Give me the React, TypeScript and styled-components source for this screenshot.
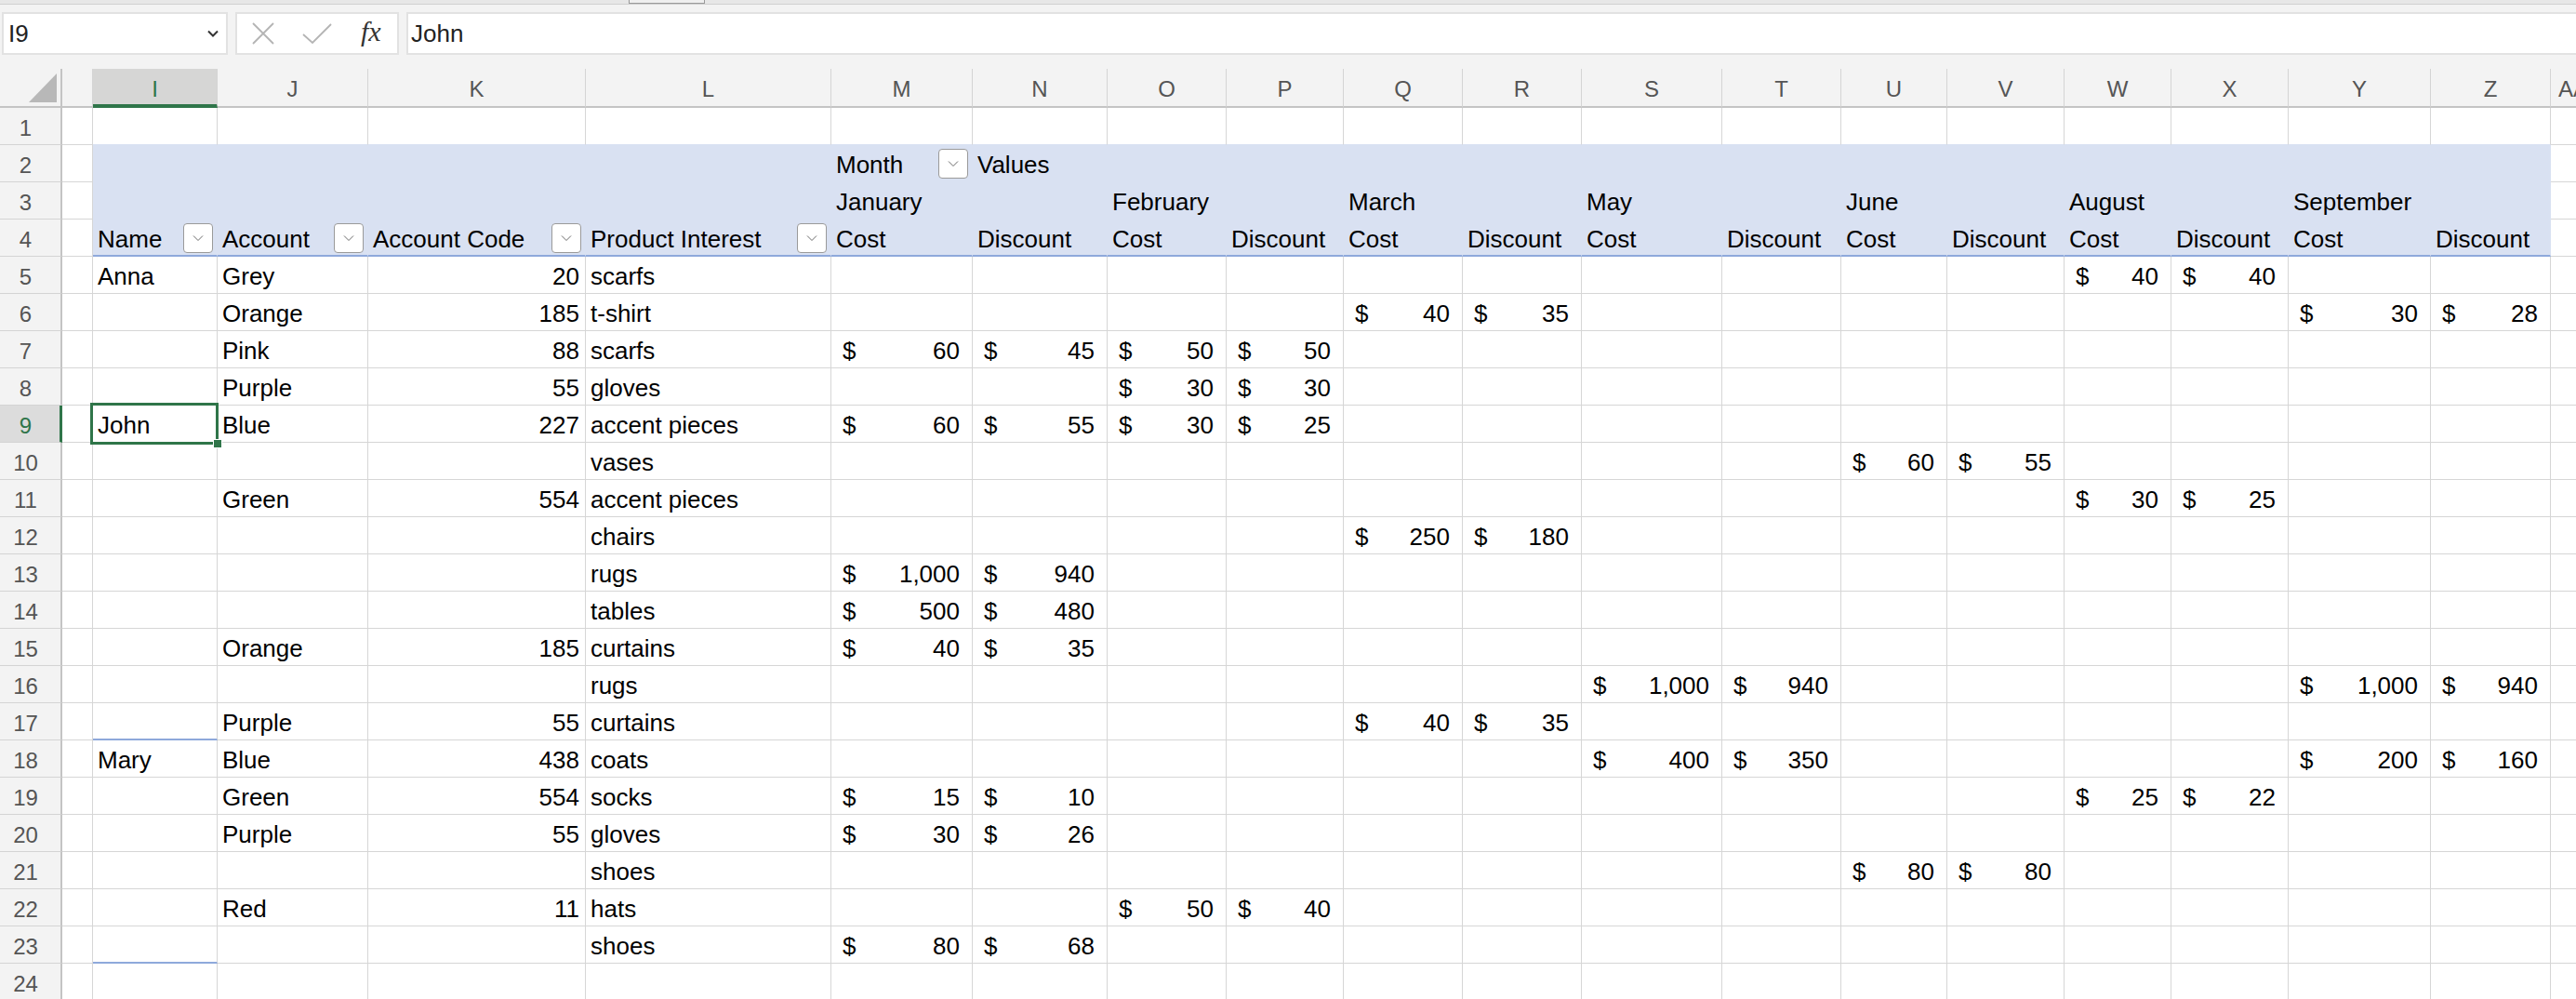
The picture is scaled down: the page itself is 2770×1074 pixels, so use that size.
import React from 'react';
import styled, { createGlobalStyle, css } from 'styled-components';

const GREEN = '#2f7549';
const GRID = '#d6d6d6';
const BAND = '#d9e1f2';
const BAND_LINE = '#8ea9db';
const CHROME = '#f3f3f3';

const GlobalStyle = createGlobalStyle`
  html, body {
    margin: 0;
    padding: 0;
    background: #fff;
    overflow: hidden;
  }
  body {
    font-family: "Liberation Sans", Arial, sans-serif;
    color: #000;
  }
`;

type Kind = 'text' | 'num' | 'usd';
type Cell = { v: string; kind: Kind; dd?: boolean };

const columns = [
  { id: 'H', w: 33 },
  { id: 'I', w: 134 },
  { id: 'J', w: 162 },
  { id: 'K', w: 234 },
  { id: 'L', w: 264 },
  { id: 'M', w: 152 },
  { id: 'N', w: 145 },
  { id: 'O', w: 128 },
  { id: 'P', w: 126 },
  { id: 'Q', w: 128 },
  { id: 'R', w: 128 },
  { id: 'S', w: 151 },
  { id: 'T', w: 128 },
  { id: 'U', w: 114 },
  { id: 'V', w: 126 },
  { id: 'W', w: 115 },
  { id: 'X', w: 126 },
  { id: 'Y', w: 153 },
  { id: 'Z', w: 129 },
  { id: 'AA', w: 40 },
];

const bandCols = columns.map((c) => c.id).filter((id) => id !== 'H' && id !== 'AA');
const nextCol: Record<string, string> = { M: 'N', O: 'P', Q: 'R', S: 'T', U: 'V', W: 'X', Y: 'Z' };

const t = (v: string, dd = false): Cell => ({ v, kind: 'text', dd });
const n = (v: string): Cell => ({ v, kind: 'num' });
const pair = (col: string, cost: string, discount: string) => ({
  [col]: { v: cost, kind: 'usd' as Kind },
  [nextCol[col]]: { v: discount, kind: 'usd' as Kind },
});

const costHeaders: Record<string, Cell> = {};
Object.keys(nextCol).forEach((c) => {
  costHeaders[c] = t('Cost');
  costHeaders[nextCol[c]] = t('Discount');
});

const data: Record<number, Record<string, Cell>> = {
  2: { M: t('Month', true), N: t('Values') },
  3: { M: t('January'), O: t('February'), Q: t('March'), S: t('May'), U: t('June'), W: t('August'), Y: t('September') },
  4: {
    I: t('Name', true),
    J: t('Account', true),
    K: t('Account Code', true),
    L: t('Product Interest', true),
    ...costHeaders,
  },
  5: { I: t('Anna'), J: t('Grey'), K: n('20'), L: t('scarfs'), ...pair('W', '40', '40') },
  6: { J: t('Orange'), K: n('185'), L: t('t-shirt'), ...pair('Q', '40', '35'), ...pair('Y', '30', '28') },
  7: { J: t('Pink'), K: n('88'), L: t('scarfs'), ...pair('M', '60', '45'), ...pair('O', '50', '50') },
  8: { J: t('Purple'), K: n('55'), L: t('gloves'), ...pair('O', '30', '30') },
  9: { I: t('John'), J: t('Blue'), K: n('227'), L: t('accent pieces'), ...pair('M', '60', '55'), ...pair('O', '30', '25') },
  10: { L: t('vases'), ...pair('U', '60', '55') },
  11: { J: t('Green'), K: n('554'), L: t('accent pieces'), ...pair('W', '30', '25') },
  12: { L: t('chairs'), ...pair('Q', '250', '180') },
  13: { L: t('rugs'), ...pair('M', '1,000', '940') },
  14: { L: t('tables'), ...pair('M', '500', '480') },
  15: { J: t('Orange'), K: n('185'), L: t('curtains'), ...pair('M', '40', '35') },
  16: { L: t('rugs'), ...pair('S', '1,000', '940'), ...pair('Y', '1,000', '940') },
  17: { J: t('Purple'), K: n('55'), L: t('curtains'), ...pair('Q', '40', '35') },
  18: { I: t('Mary'), J: t('Blue'), K: n('438'), L: t('coats'), ...pair('S', '400', '350'), ...pair('Y', '200', '160') },
  19: { J: t('Green'), K: n('554'), L: t('socks'), ...pair('M', '15', '10'), ...pair('W', '25', '22') },
  20: { J: t('Purple'), K: n('55'), L: t('gloves'), ...pair('M', '30', '26') },
  21: { L: t('shoes'), ...pair('U', '80', '80') },
  22: { J: t('Red'), K: n('11'), L: t('hats'), ...pair('O', '50', '40') },
  23: { L: t('shoes'), ...pair('M', '80', '68') },
};

const groupEnds = [8, 17, 23];
const rowNumbers = Array.from({ length: 24 }, (_, i) => i + 1);

const Chevron = ({ size = 12, color = '#333', weight = 2 }: { size?: number; color?: string; weight?: number }) => (
  <svg width={size} height={size / 2 + 2} viewBox="0 0 12 8" fill="none">
    <path d="M1 1.5 L6 6.5 L11 1.5" stroke={color} strokeWidth={weight} />
  </svg>
);

export default function App() {
  return (
    <Page>
      <GlobalStyle />
      <TopStrip>
        <StripHandle />
      </TopStrip>
      <FormulaBar>
        <NameBox>
          <span>I9</span>
          <Chevron />
        </NameBox>
        <FxBox>
          <svg width="24" height="24" viewBox="0 0 24 24">
            <path d="M1 1 L23 23 M23 1 L1 23" stroke="#b4b4b4" strokeWidth="1.8" />
          </svg>
          <svg width="32" height="22" viewBox="0 0 32 22">
            <path d="M1 12 L11 21 L31 1" stroke="#b4b4b4" strokeWidth="1.8" fill="none" />
          </svg>
          <FxLabel>fx</FxLabel>
        </FxBox>
        <FormulaInput>John</FormulaInput>
      </FormulaBar>

      <Sheet>
        <Corner>
          <svg width="30" height="31" viewBox="0 0 30 31">
            <polygon points="30,0 30,31 0,31" fill="#b8b8b8" />
          </svg>
        </Corner>
        {columns.map((c) => (
          <ColHead key={c.id} $active={c.id === 'I'} $edge={c.id === 'AA'}>
            {c.id === 'H' ? '' : c.id}
          </ColHead>
        ))}

        {rowNumbers.map((r) => (
          <React.Fragment key={r}>
            <RowHead $active={r === 9}>{r}</RowHead>
            {columns.map((c) => {
              const cell = data[r]?.[c.id];
              const band = r >= 2 && r <= 4 && bandCols.includes(c.id);
              return (
                <GridCell
                  key={c.id}
                  $band={band}
                  $bandBottom={band && r === 4}
                  $aboveBand={r === 1 && bandCols.includes(c.id)}
                  $group={c.id === 'I' && groupEnds.includes(r)}
                  $selected={c.id === 'I' && r === 9}
                  $kind={cell?.kind ?? 'text'}
                >
                  {cell && cell.kind === 'usd' ? (
                    <>
                      <span>$</span>
                      <span>{cell.v}</span>
                    </>
                  ) : (
                    cell && <span>{cell.v}</span>
                  )}
                  {cell?.dd && (
                    <FilterButton>
                      <Chevron size={12} color="#6a6a6a" weight={1} />
                    </FilterButton>
                  )}
                </GridCell>
              );
            })}
          </React.Fragment>
        ))}
      </Sheet>
    </Page>
  );
}

// Styles

const Page = styled.div`
  width: 2770px;
  height: 1074px;
  overflow: hidden;
  background: #fff;
`;

const TopStrip = styled.div`
  height: 4px;
  background: #e7e7e7;
  border-bottom: 1px solid #d0d0d0;
  display: flex;
`;

const StripHandle = styled.div`
  margin-left: 676px;
  width: 80px;
  height: 3px;
  border: 1px solid #9a9a9a;
  border-top: none;
  background: #efefef;
`;

const FormulaBar = styled.div`
  display: flex;
  gap: 8px;
  height: 46px;
  padding: 8px 0 15px 2px;
  background: ${CHROME};
`;

const boxBase = css`
  box-sizing: border-box;
  height: 46px;
  background: #fff;
  border: 2px solid #e2e2e2;
  display: flex;
  align-items: center;
  font-size: 26px;
  color: #222;
`;

const NameBox = styled.div`
  ${boxBase};
  width: 243px;
  padding: 0 8px 0 5px;
  justify-content: space-between;
`;

const FxBox = styled.div`
  ${boxBase};
  width: 176px;
  padding-left: 16px;
  gap: 30px;
`;

const FxLabel = styled.span`
  font-family: "Liberation Serif", "Times New Roman", serif;
  font-style: italic;
  font-size: 30px;
  color: #333;
  margin-left: 1px;
  padding-bottom: 4px;
`;

const FormulaInput = styled.div`
  ${boxBase};
  flex: 1;
  padding-left: 3px;
  border-right: none;
`;

const Sheet = styled.div`
  display: grid;
  grid-template-columns: 67px ${columns.map((c) => `${c.w}px`).join(' ')};
  grid-template-rows: 42px repeat(24, 40px);
  background: ${CHROME};
`;

const Corner = styled.div`
  box-sizing: border-box;
  display: flex;
  justify-content: flex-end;
  align-items: flex-end;
  padding: 0 4px 4px 0;
  background: ${CHROME};
  border-right: 2px solid #c4c4c4;
  border-bottom: 2px solid #c4c4c4;
`;

const ColHead = styled.div<{ $active: boolean; $edge: boolean }>`
  box-sizing: border-box;
  display: flex;
  align-items: center;
  justify-content: ${(p) => (p.$edge ? 'flex-start' : 'center')};
  padding: 4px 0 0 ${(p) => (p.$edge ? '8px' : '0')};
  font-size: 24px;
  color: #555;
  background: ${CHROME};
  border-right: 1px solid #d4d4d4;
  border-bottom: 2px solid #c4c4c4;

  ${(p) =>
    p.$active &&
    css`
      background: #d6d6d5;
      color: ${GREEN};
      border-bottom: 4px solid ${GREEN};
      padding-top: 6px;
    `}
`;

const RowHead = styled.div<{ $active: boolean }>`
  box-sizing: border-box;
  display: flex;
  align-items: center;
  justify-content: center;
  padding: 4px 10px 0 0;
  font-size: 24px;
  color: #555;
  background: ${CHROME};
  border-bottom: 1px solid #d4d4d4;
  border-right: 2px solid #c4c4c4;

  ${(p) =>
    p.$active &&
    css`
      background: #dcdcdc;
      color: ${GREEN};
      border-right: 3px solid ${GREEN};
      padding-right: 9px;
    `}
`;

const GridCell = styled.div<{
  $band: boolean;
  $bandBottom: boolean;
  $aboveBand: boolean;
  $group: boolean;
  $selected: boolean;
  $kind: Kind;
}>`
  box-sizing: border-box;
  position: relative;
  display: flex;
  align-items: flex-end;
  justify-content: ${(p) => (p.$kind === 'text' ? 'flex-start' : p.$kind === 'num' ? 'flex-end' : 'space-between')};
  padding: ${(p) => (p.$kind === 'usd' ? '0 13px 2px 12px' : p.$kind === 'num' ? '0 6px 2px 5px' : '0 4px 2px 5px')};
  font-size: 26px;
  line-height: 1.15;
  white-space: nowrap;
  background: #fff;
  border-right: 1px solid ${GRID};
  border-bottom: 1px solid ${GRID};

  ${(p) =>
    p.$aboveBand &&
    css`
      border-bottom-color: ${BAND};
    `}

  ${(p) =>
    p.$band &&
    css`
      background: ${BAND};
      border-right-color: ${BAND};
      border-bottom-color: ${BAND};
    `}

  ${(p) =>
    p.$bandBottom &&
    css`
      border-bottom: 2px solid ${BAND_LINE};
      padding-bottom: 1px;
    `}

  ${(p) =>
    p.$group &&
    css`
      border-bottom: 2px solid ${BAND_LINE};
      padding-bottom: 1px;
    `}

  ${(p) =>
    p.$selected &&
    css`
      z-index: 2;
      overflow: visible;

      &::after {
        content: '';
        position: absolute;
        left: -3px;
        top: -3px;
        right: -2px;
        bottom: -3px;
        border: 3px solid ${GREEN};
      }

      &::before {
        content: '';
        position: absolute;
        right: -6px;
        bottom: -7px;
        width: 8px;
        height: 8px;
        background: ${GREEN};
        border: 1px solid #fff;
        z-index: 3;
      }
    `}
`;

const FilterButton = styled.div`
  box-sizing: border-box;
  align-self: center;
  margin-left: auto;
  margin-top: 2px;
  width: 32px;
  height: 32px;
  display: flex;
  align-items: center;
  justify-content: center;
  background: #fff;
  border: 1px solid #9a9a9a;
  border-radius: 4px;
`;
